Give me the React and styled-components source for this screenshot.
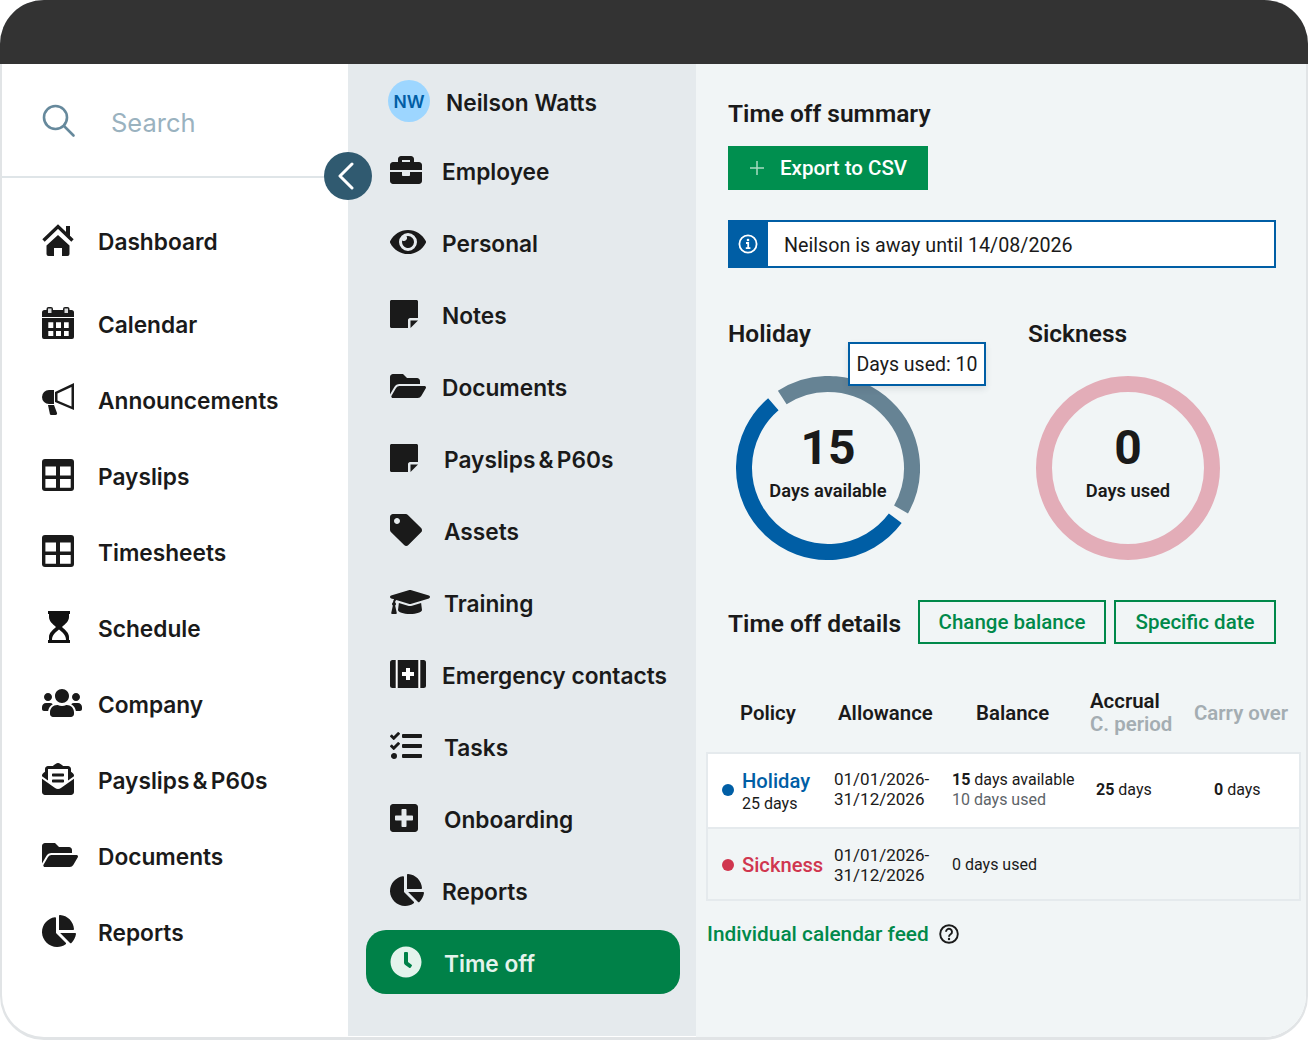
import React from 'react';
import styled, { createGlobalStyle } from 'styled-components';
import {
  FaUsers, FaEnvelopeOpenText, FaFolderOpen, FaChartPie,
  FaBriefcase, FaEye, FaTag, FaGraduationCap, FaTasks, FaPlusSquare,
  FaClock,
} from 'react-icons/fa';

const Global = createGlobalStyle`
  html, body { margin: 0; padding: 0; background: #fff; }
  body { font-family: "Inter", "Liberation Sans", sans-serif; color: #1a1a1a; }
  * { box-sizing: border-box; }
`;

const Frame = styled.div`
  position: relative;
  width: 1308px;
  height: 1040px;
  display: flex;
  flex-direction: column;
  border-radius: 44px;
  overflow: hidden;
  background: #e1e4e6;
`;

const TopBar = styled.div`
  height: 64px;
  flex: none;
  background: #333333;
`;

const Columns = styled.div`
  flex: 1;
  min-height: 0;
  display: flex;
  margin: 0 2px 3px;
  border-radius: 0 0 42px 42px;
  overflow: hidden;
  background: #fff;
`;

const Sidebar = styled.nav`
  width: 346px;
  flex: none;
`;

const SearchRow = styled.div`
  height: 114px;
  display: flex;
  align-items: center;
  gap: 35px;
  padding: 2px 0 0 40px;
  border-bottom: 2px solid #dfe5e8;
  color: #9ab2bf;
  font-size: 25.5px;
`;

const SearchText = styled.span`
  padding-top: 2px;
`;

const SideList = styled.div`
  display: flex;
  flex-direction: column;
  padding-top: 26px;
`;

const SideItem = styled.div`
  height: 76px;
  display: flex;
  align-items: center;
  padding: 0 0 2px 40px;
  gap: 24px;
  font-size: 22.7px;
  font-weight: 600;
  word-spacing: ${(p) => p.$tight ? '-2.5px' : 'normal'};
  margin-bottom: ${(p) => p.$extra || 0}px;
`;

const IconBox = styled.span`
  width: 32px;
  flex: none;
  display: flex;
  align-items: center;
  margin-bottom: 2px;
  line-height: 0;

  svg {
    flex: none;
    width: ${(p) => p.$w || 32}px;
    height: ${(p) => p.$h || 32}px;
  }
`;

const Middle = styled.nav`
  width: 348px;
  flex: none;
  height: 972px;
  padding: 0 16px 0 18px;
  background: #e5eaed;
`;

const Person = styled.div`
  height: 72px;
  display: flex;
  align-items: center;
  gap: 16px;
  padding: 4px 0 0 22px;
  font-size: 22.7px;
  font-weight: 600;
`;

const Avatar = styled.span`
  width: 42px;
  height: 42px;
  margin-bottom: 2px;
  border-radius: 50%;
  background: #9dd6ff;
  color: #005ea5;
  font-size: 17.5px;
  font-weight: 600;
  display: flex;
  align-items: center;
  justify-content: center;
`;

const MidItem = styled.div`
  height: ${(p) => (p.$active ? 64 : 72)}px;
  display: flex;
  align-items: center;
  padding: ${(p) => (p.$active ? '2px 0 0 24px' : '0 0 2px 24px')};
  gap: ${(p) => p.$gap || 20}px;
  font-size: 22.7px;
  font-weight: 600;
  word-spacing: ${(p) => p.$tight ? '-2.5px' : 'normal'};
  border-radius: 20px;
  margin-top: ${(p) => (p.$active ? 2 : 0)}px;
  background: ${(p) => (p.$active ? '#008148' : 'transparent')};
  color: ${(p) => (p.$active ? '#e4f3ec' : 'inherit')};
`;

const Collapse = styled.button`
  position: absolute;
  left: 324px;
  top: 152px;
  width: 48px;
  height: 48px;
  padding: 0;
  border: 0;
  border-radius: 50%;
  background: #305a70;
  display: flex;
  align-items: center;
  justify-content: center;
`;

const Content = styled.main`
  flex: 1;
  min-width: 0;
  padding: 32px 5px 0 10px;
  background: #f1f5f6;
  font-family: "Roboto", "Liberation Sans", sans-serif;
`;

const Inset = styled.div`
  padding-left: 22px;
  padding-right: 25px;
`;

const Title = styled.h2`
  margin: 0;
  font-size: 24.5px;
  line-height: 36px;
  font-weight: 600;
`;

const DetailsTitle = styled(Title)`
  margin-top: 4px;
`;

const ExportButton = styled.button`
  margin-top: 14px;
  width: 200px;
  height: 44px;
  padding: 0 0 0 22px;
  border: 0;
  display: flex;
  align-items: center;
  gap: 16px;
  background: #008f4f;
  color: #fff;
  font-family: inherit;
  font-size: 20.5px;
  font-weight: 500;
`;

const Alert = styled.div`
  margin-top: 30px;
  height: 48px;
  display: flex;
  align-items: center;
  border: 2px solid #005ea5;
  background: #fff;
  font-size: 19.7px;
`;

const AlertIcon = styled.span`
  width: 40px;
  height: 100%;
  margin-left: -2px;
  flex: none;
  display: flex;
  align-items: center;
  justify-content: center;
  background: #005ea5;
`;

const AlertText = styled.span`
  padding: 2px 0 0 16px;
`;

const Charts = styled.div`
  position: relative;
  margin-top: 48px;
  display: flex;
`;

const Chart = styled.section`
  width: 300px;
  flex: none;
`;

const Ring = styled.div`
  position: relative;
  width: 184px;
  height: 184px;
  margin: 24px 0 0 8px;
`;

const RingLabel = styled.div`
  position: absolute;
  inset: 0;
  display: flex;
  flex-direction: column;
  align-items: center;
  padding-top: 44px;
`;

const RingValue = styled.span`
  font-size: 48px;
  line-height: 56px;
  font-weight: 700;
`;

const RingCaption = styled.span`
  font-size: 18.3px;
  line-height: 24px;
  margin-top: 3px;
  font-weight: 600;
`;

const Tooltip = styled.div`
  position: absolute;
  left: 120px;
  top: 26px;
  width: 138px;
  height: 44px;
  display: flex;
  align-items: center;
  justify-content: center;
  border: 2px solid #005ea5;
  background: #fff;
  box-shadow: 0 3px 6px rgba(40, 60, 70, 0.12);
  font-size: 19.5px;
`;

const DetailsRow = styled.div`
  margin-top: 40px;
  display: flex;
  align-items: center;
  justify-content: space-between;
`;

const DetailActions = styled.div`
  display: flex;
  gap: 8px;
`;

const OutlineButton = styled.button`
  width: ${(p) => p.$w}px;
  height: 44px;
  padding: 0;
  border: 2px solid #00894a;
  background: transparent;
  color: #00894a;
  font-family: inherit;
  font-size: 20.5px;
  font-weight: 500;
`;

const HeadRow = styled.div`
  margin-top: 38px;
  height: 70px;
  display: grid;
  grid-template-columns: 98px 138px 114px 104px 1fr;
  padding: 0 0 8px 34px;
  align-items: center;
  font-size: 20.4px;
  font-weight: 600;
  line-height: 23px;
`;

const Muted = styled.div`
  color: #a4adb2;
`;

const Table = styled.div`
  border: 2px solid #e5eaed;
`;

const Row = styled.div`
  height: ${(p) => (p.$first ? 75 : 70)}px;
  display: grid;
  grid-template-columns: 112px 118px 144px 118px 1fr;
  padding: ${(p) => (p.$first ? '0 0 1px 14px' : '2px 0 0 14px')};
  align-items: center;
  font-size: 16px;
  line-height: 20px;
  background: ${(p) => (p.$first ? '#fff' : 'transparent')};
  border-bottom: ${(p) => (p.$first ? '2px solid #e5eaed' : '0')};
`;

const Policy = styled.div`
  display: flex;
  align-items: center;
  gap: 8px;
`;

const PolicyBlock = styled.div`
  padding-top: 2px;
`;

const Dot = styled.span`
  width: 12px;
  height: 12px;
  flex: none;
  border-radius: 50%;
  background: ${(p) => p.$color};
`;

const PolicyName = styled.div`
  color: ${(p) => p.$color};
  font-size: 20.2px;
  line-height: 26px;
  font-weight: 500;
`;

const Dates = styled.div`
  font-size: 17px;
  margin-bottom: ${(p) => (p.$up ? 2 : 0)}px;
`;

const Faint = styled.div`
  color: #5d6468;
`;

const FeedLink = styled.div`
  margin-top: 21px;
  display: flex;
  align-items: center;
  gap: 10px;
  padding-left: 1px;
  color: #00894a;
  font-size: 20.8px;
  font-weight: 500;
`;

const dark = '#1a1a1a';

const SearchIcon = () => (
  <svg width="34" height="34" viewBox="0 0 34 34" fill="none" stroke="#66899c" strokeWidth="2.6" strokeLinecap="round">
    <circle cx="13.500" cy="13.500" r="11.500" />
    <path d="M22 22l9.500 9.500" />
  </svg>
);

const HomeIcon = () => (
  <svg viewBox="0 0 32 32" fill={dark}>
    <path d="M1.500 16.500L16 2.500l14.500 14" fill="none" stroke={dark} strokeWidth="3.400" />
    <rect x="24" y="2" width="4" height="10" />
    <path d="M4.500 21.500L16 11l11.500 10.500V30a2 2 0 0 1-2 2H20v-8h-8v8H6.500a2 2 0 0 1-2-2z" />
  </svg>
);

const CalendarIcon = () => (
  <svg viewBox="0 0 32 32">
    <path fill={dark} d="M2.500 3h27A2.500 2.500 0 0 1 32 5.500V30a2 2 0 0 1-2 2H2a2 2 0 0 1-2-2V5.500A2.500 2.500 0 0 1 2.500 3z" />
    <rect x="4.500" y="0" width="6.500" height="7.500" rx="2" fill={dark} />
    <rect x="21" y="0" width="6.500" height="7.500" rx="2" fill={dark} />
    <path fill="#d8dadb" d="M6 1.500h3.500v4.500H6zM22.500 1.500H26v4.500h-3.500z" />
    <path fill="#fff" d="M0 10h32v1H0zM6.300 15.300h5V21h-5zM14 15.300h5V21h-5zM22 15.300h4.700V21H22zM6.300 24h5v5h-5zM14 24h5v5h-5zM22 24h4.700v5H22z" />
  </svg>
);

const BullhornIcon = () => (
  <svg viewBox="0 0 32 32" fill={dark}>
    <path d="M12 7H7a7 7 0 0 0 0 14h5z" />
    <path fillRule="evenodd" d="M32 0v27L13 19V9zM29.500 4L15.500 10.600v7L29.500 23.400z" />
    <path d="M6 22h6l3 8c.4 1.200-.5 2-1.500 2h-4c-.8 0-1.400-.4-1.600-1z" />
  </svg>
);

const GridIcon = () => (
  <svg viewBox="0 0 32 32">
    <rect width="32" height="32" rx="3" fill={dark} />
    <path fill="#fff" d="M3.400 7.400H14v9.200H3.400zM18 7.400h10.700v9.200H18zM3.400 20H14v8.700H3.400zM18 20h10.700v8.700H18z" />
  </svg>
);

const HourglassIcon = () => (
  <svg viewBox="0 0 32 32">
    <path fill="#111" d="M6 0h22v3h-1v3c0 4-3.500 7-7 10 3.500 3 7 6 7 10v3h1v3H6v-3h1v-3c0-4 3.500-7 7-10-3.500-3-7-6-7-10V3H6z" />
    <path fill="#fff" d="M17 18.500c3 2.500 7 5 7 10.500H10c0-5.500 4-8 7-10.500z" />
  </svg>
);

const NoteIcon = () => (
  <svg viewBox="0 0 28 28">
    <path fill={dark} d="M1.500 0h25c.8 0 1.500.7 1.500 1.500V18H20c-1 0-2 1-2 2v8H1.500C.7 28 0 27.300 0 26.500v-25C0 .7.700 0 1.500 0z" />
    <path fill={dark} d="M20.500 20.500H28L20.500 28z" />
  </svg>
);

const MedkitIcon = () => (
  <svg viewBox="0 0 36 28">
    <rect width="36" height="28" rx="2.500" fill={dark} />
    <path fill="#fff" d="M5.700 0h2v28h-2zM28.300 0h2v28h-2zM16 8h4v4h4v4h-4v4h-4v-4h-4v-4h4z" />
  </svg>
);

const InfoIcon = () => (
  <svg width="20" height="20" viewBox="0 0 20 20" fill="none" stroke="#fff">
    <circle cx="10" cy="10" r="8.600" strokeWidth="1.800" />
    <circle cx="10" cy="6" r="1.300" fill="#fff" stroke="none" />
    <path d="M8 9h2.200v5M7.800 14.200h4.600" strokeWidth="1.800" />
  </svg>
);

const HelpIcon = () => (
  <svg width="20" height="20" viewBox="0 0 20 20" fill="none" stroke={dark} strokeWidth="1.900">
    <circle cx="10" cy="10" r="8.800" />
    <path d="M7 7.800a3 3 0 1 1 4.600 2.500c-1 .7-1.600 1.200-1.600 2.400" />
    <circle cx="10" cy="15" r="1.200" fill={dark} stroke="none" />
  </svg>
);

const PlusIcon = () => (
  <svg width="14" height="14" viewBox="0 0 14 14" stroke="#a9dcc2" strokeWidth="1.500">
    <path d="M7 0v14M0 7h14" />
  </svg>
);

const Chevron = () => (
  <svg width="20" height="28" viewBox="0 0 20 28" fill="none" stroke="#fff" strokeWidth="3" strokeLinecap="round" strokeLinejoin="round">
    <path d="M14 2L2 14l12 12" />
  </svg>
);

const polar = (deg) => {
  const rad = (deg * Math.PI) / 180;
  return [92 + 84 * Math.sin(rad), 92 - 84 * Math.cos(rad)];
};

const arc = (from, to) => {
  const [x1, y1] = polar(from);
  const [x2, y2] = polar(to);
  return `M${x1} ${y1}A84 84 0 ${to - from > 180 ? 1 : 0} 1 ${x2} ${y2}`;
};

const HolidayRing = () => (
  <svg width="184" height="184" fill="none" strokeWidth="16">
    <path d={arc(-33, 119.6)} stroke="#668394" />
    <path d={arc(126.8, 319.4)} stroke="#005ea5" />
  </svg>
);

const SicknessRing = () => (
  <svg width="184" height="184" fill="none">
    <circle cx="92" cy="92" r="84" stroke="#e3adb8" strokeWidth="16" />
  </svg>
);

const sideItems = [
  { label: 'Calendar', icon: <CalendarIcon /> },
  { label: 'Announcements', icon: <BullhornIcon /> },
  { label: 'Payslips', icon: <GridIcon /> },
  { label: 'Timesheets', icon: <GridIcon /> },
  { label: 'Schedule', icon: <HourglassIcon /> },
  { label: 'Company', icon: <FaUsers />, w: 40 },
  { label: 'Payslips & P60s', icon: <FaEnvelopeOpenText />, tight: true },
  { label: 'Documents', icon: <FaFolderOpen />, w: 36 },
  { label: 'Reports', icon: <FaChartPie />, w: 34 },
];

const midItems = [
  { label: 'Employee', icon: <FaBriefcase /> },
  { label: 'Personal', icon: <FaEye />, w: 36 },
  { label: 'Notes', icon: <NoteIcon />, w: 28, h: 28 },
  { label: 'Documents', icon: <FaFolderOpen />, w: 36 },
  { label: 'Payslips & P60s', icon: <NoteIcon />, w: 28, h: 28, gap: 22, tight: true },
  { label: 'Assets', icon: <FaTag />, gap: 22 },
  { label: 'Training', icon: <FaGraduationCap />, w: 40, gap: 22 },
  { label: 'Emergency contacts', icon: <MedkitIcon />, w: 36, h: 28 },
  { label: 'Tasks', icon: <FaTasks />, gap: 22 },
  { label: 'Onboarding', icon: <FaPlusSquare />, w: 28, gap: 22 },
  { label: 'Reports', icon: <FaChartPie />, w: 34 },
];

const App = () => (
  <Frame>
    <Global />
    <TopBar />
    <Columns>
      <Sidebar>
        <SearchRow>
          <SearchIcon />
          <SearchText>Search</SearchText>
        </SearchRow>
        <SideList>
          <SideItem $extra={7}>
            <IconBox><HomeIcon /></IconBox>
            Dashboard
          </SideItem>
          {sideItems.map((item) => (
            <SideItem key={item.label} $tight={item.tight}>
              <IconBox $w={item.w}>{item.icon}</IconBox>
              {item.label}
            </SideItem>
          ))}
        </SideList>
      </Sidebar>
      <Middle>
        <Person>
          <Avatar>NW</Avatar>
          Neilson Watts
        </Person>
        {midItems.map((item) => (
          <MidItem key={item.label} $gap={item.gap} $tight={item.tight}>
            <IconBox $w={item.w} $h={item.h}>{item.icon}</IconBox>
            {item.label}
          </MidItem>
        ))}
        <MidItem $active $gap={22}>
          <IconBox><FaClock /></IconBox>
          Time off
        </MidItem>
      </Middle>
      <Content>
        <Inset>
          <Title>Time off summary</Title>
          <ExportButton>
            <PlusIcon />
            Export to CSV
          </ExportButton>
          <Alert>
            <AlertIcon><InfoIcon /></AlertIcon>
            <AlertText>Neilson is away until 14/08/2026</AlertText>
          </Alert>
          <Charts>
            <Chart>
              <Title>Holiday</Title>
              <Ring>
                <HolidayRing />
                <RingLabel>
                  <RingValue>15</RingValue>
                  <RingCaption>Days available</RingCaption>
                </RingLabel>
              </Ring>
            </Chart>
            <Chart>
              <Title>Sickness</Title>
              <Ring>
                <SicknessRing />
                <RingLabel>
                  <RingValue>0</RingValue>
                  <RingCaption>Days used</RingCaption>
                </RingLabel>
              </Ring>
            </Chart>
            <Tooltip>Days used: 10</Tooltip>
          </Charts>
          <DetailsRow>
            <DetailsTitle>Time off details</DetailsTitle>
            <DetailActions>
              <OutlineButton $w={188}>Change balance</OutlineButton>
              <OutlineButton $w={162}>Specific date</OutlineButton>
            </DetailActions>
          </DetailsRow>
        </Inset>
        <HeadRow>
          <div>Policy</div>
          <div>Allowance</div>
          <div>Balance</div>
          <div>
            Accrual
            <Muted>C. period</Muted>
          </div>
          <Muted>Carry over</Muted>
        </HeadRow>
        <Table>
          <Row $first>
            <Policy>
              <Dot $color="#005ea5" />
              <PolicyBlock>
                <PolicyName $color="#005ea5">Holiday</PolicyName>
                <div>25 days</div>
              </PolicyBlock>
            </Policy>
            <Dates $up>01/01/2026-<br />31/12/2026</Dates>
            <div>
              <div><b>15</b> days available</div>
              <Faint>10 days used</Faint>
            </div>
            <div><b>25</b> days</div>
            <div><b>0</b> days</div>
          </Row>
          <Row>
            <Policy>
              <Dot $color="#d0364f" />
              <PolicyName $color="#d0364f">Sickness</PolicyName>
            </Policy>
            <Dates>01/01/2026-<br />31/12/2026</Dates>
            <div>0 days used</div>
          </Row>
        </Table>
        <FeedLink>
          Individual calendar feed
          <HelpIcon />
        </FeedLink>
      </Content>
    </Columns>
    <Collapse><Chevron /></Collapse>
  </Frame>
);

export default App;
